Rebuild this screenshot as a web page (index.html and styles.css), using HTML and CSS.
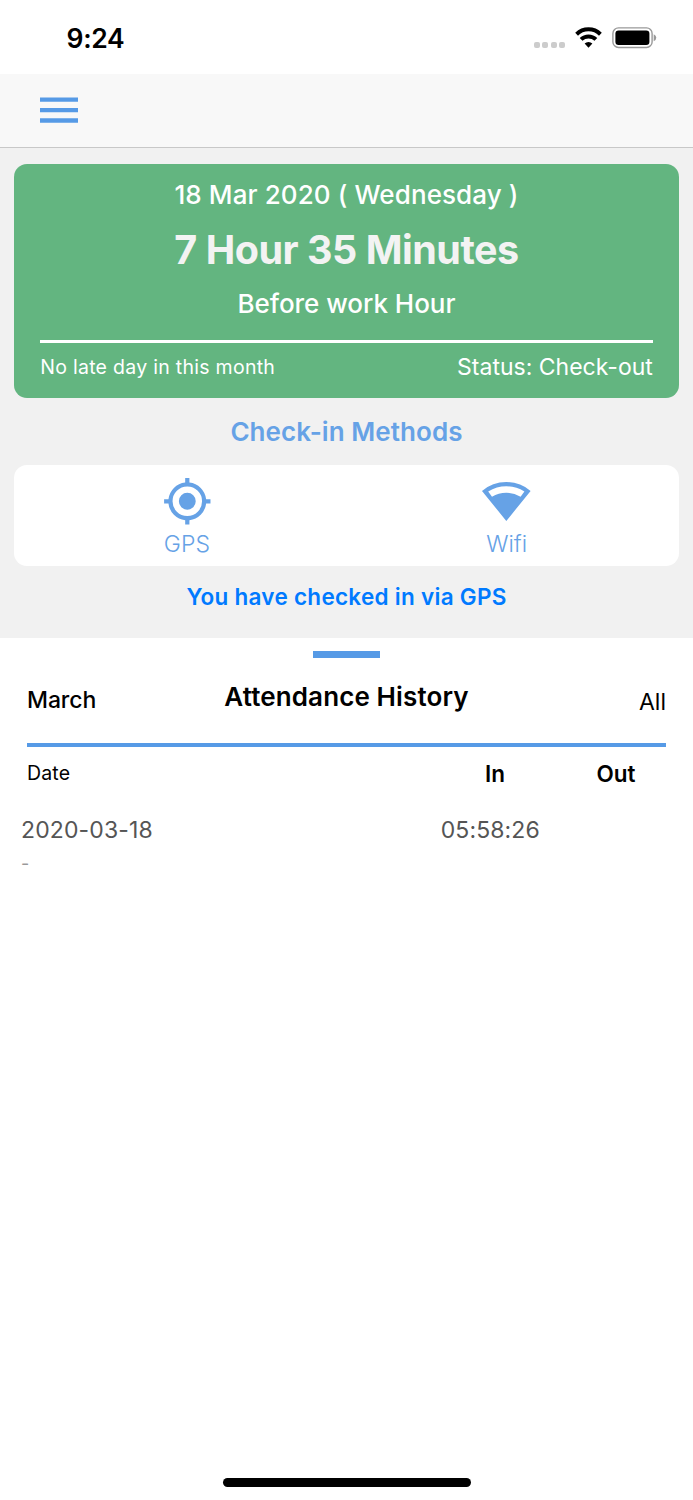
FILE: index.html
```html
<!DOCTYPE html>
<html lang="en">
<head>
<meta charset="utf-8">
<title>Attendance</title>
<link rel="stylesheet" href="styles.css">
</head>
<body>
<header class="status-bar">
  <span class="time">9:24</span>
  <div class="indicators">
    <div class="signal"><i></i><i></i><i></i><i></i></div>
    <svg class="wifi-status" width="27" height="21" viewBox="0 0 27 21">
      <g fill="none" stroke="#000" stroke-width="4">
        <path d="M1.6 7.2A17 17 0 0 1 25.4 7.2"/>
        <path d="M6.100 12.400A10.600 10.600 0 0 1 20.900 12.400"/>
      </g>
      <path d="M13.500 20.800L9.600 16.600A5.700 5.700 0 0 1 17.400 16.600Z"/>
    </svg>
    <svg class="battery" width="45" height="22" viewBox="0 0 45 22">
      <rect x="0.9" y="0.9" width="39.2" height="19.6" rx="5.6" fill="#fff" stroke="#999" stroke-width="1.4"/>
      <rect x="3.400" y="3.400" width="34" height="14.600" rx="3.200"/>
      <path d="M41.700 7.200Q44.300 8.400 44.300 10.700Q44.300 13 41.700 14.200Z" fill="#999"/>
    </svg>
  </div>
</header>
<nav class="nav-bar">
  <svg class="menu" width="38" height="27" viewBox="0 0 38 27"><path fill="#569ae6" d="M0 .4H38V4.800H0ZM0 10.900H38V15.300H0ZM0 21.300H38V25.700H0Z"/></svg>
</nav>
<main class="dashboard">
  <section class="summary">
    <p class="date">18 Mar 2020 ( Wednesday )</p>
    <h1 class="remaining">7 Hour 35 Minutes</h1>
    <p class="before">Before work Hour</p>
    <hr class="summary-rule">
    <div class="summary-foot">
      <span class="late">No late day in this month</span>
      <span class="status">Status: Check-out</span>
    </div>
  </section>
  <h2 class="methods-title">Check-in Methods</h2>
  <section class="methods">
    <div class="method">
      <svg width="50.6" height="50.6" viewBox="0 0 24 24"><path fill="#66a2e6" d="M12 8a4 4 0 1 0 0 8a4 4 0 0 0 0-8zM20.94 11A8.99 8.99 0 0 0 13 3.06V1h-2v2.06A8.99 8.99 0 0 0 3.06 11H1v2h2.06A8.99 8.99 0 0 0 11 20.94V23h2v-2.06A8.99 8.99 0 0 0 20.94 13H23v-2zM12 19a7 7 0 1 1 0-14a7 7 0 0 1 0 14z"/></svg>
      <span class="method-name">GPS</span>
    </div>
    <div class="method">
      <svg width="50.6" height="50.6" viewBox="0 0 50.6 50.6"><path fill="#66a2e6" fill-rule="evenodd" d="M1 14.900Q11.500 6 25.300 6Q39.100 6 49.600 14.900L25.300 45ZM7.200 15.500L11 20.700Q17.500 16.700 25.300 16.700Q33.100 16.700 39.600 20.700L43.400 15.500Q35 10.300 25.300 10.300Q15.600 10.300 7.200 15.500Z"/></svg>
      <span class="method-name">Wifi</span>
    </div>
  </section>
  <p class="notice">You have checked in via GPS</p>
</main>
<section class="history">
  <div class="handle"></div>
  <div class="history-head">
    <span class="month">March</span>
    <h2 class="history-title">Attendance History</h2>
    <span class="all">All</span>
  </div>
  <div class="columns">
    <span class="col-date">Date</span>
    <b class="col-in">In</b>
    <b class="col-out">Out</b>
  </div>
  <div class="entry">
    <span class="entry-date">2020-03-18</span>
    <span class="entry-in">05:58:26</span>
  </div>
  <div class="entry-note">-</div>
</section>
<div class="home-indicator"></div>
</body>
</html>
```
FILE: styles.css
```css
* { box-sizing: border-box; }
body, h1, h2, p, hr { margin: 0; }
body {
  width: 693px;
  height: 1500px;
  display: flex;
  flex-direction: column;
  background: #fff;
  color: #000;
  font-family: Inter, "Liberation Sans", sans-serif;
  font-size: 23px;
  overflow: hidden;
}
i { display: block; }
.status-bar {
  height: 74px;
  display: flex;
  justify-content: space-between;
  padding: 0 36px 0 66.500px;
}
.time { font-size: 26.500px; font-weight: 600; line-height: 77px; letter-spacing: -0.3px; }
.indicators { display: flex; align-items: flex-start; padding-top: 27px; }
.signal { display: flex; gap: 2.400px; padding-top: 15px; }
.signal i { width: 6px; height: 6px; border-radius: 2px; background: #ccc; }
.wifi-status { margin-left: 10px; }
.battery { margin-left: 10px; }
.nav-bar {
  height: 74px;
  padding: 23px 40px;
  background: #f8f8f8;
  border-bottom: 1px solid #c8c8c8;
}
.menu { display: block; }
.dashboard {
  height: 489.700px;
  padding: 16.300px 13.700px 0;
  background: #f1f1f1;
}
.summary {
  height: 234px;
  padding: 11px 26.500px 0;
  border-radius: 13px;
  background: #63b580;
  color: #fff;
  text-align: center;
}
.date { font-size: 26px; font-weight: 450; line-height: 40px; letter-spacing: 0.100px; }
.remaining { font-size: 39.500px; font-weight: 700; line-height: 70px; letter-spacing: -0.480px; color: #f3f3f3; }
.before { font-size: 26px; font-weight: 450; line-height: 38px; letter-spacing: -0.030px; }
.summary-rule { height: 3.400px; margin-top: 16.600px; border: 0; background: #fff; }
.summary-foot { display: flex; justify-content: space-between; line-height: 48px; }
.late { font-size: 19.500px; letter-spacing: 0.280px; }
.status { font-size: 23px; }
.methods-title { font-size: 26px; font-weight: 600; line-height: 67px; letter-spacing: 0.060px; text-align: center; color: #66a2e6; }
.methods {
  height: 100.400px;
  display: flex;
  padding: 10.400px 12.700px 0 13.300px;
  border-radius: 13px;
  background: #fff;
  color: #66a2e6;
}
.method { flex: 1; display: flex; flex-direction: column; align-items: center; }
.method-name { line-height: 37px; font-weight: 350; }
.notice { font-size: 22.500px; font-weight: 600; line-height: 62px; letter-spacing: 0.280px; text-align: center; color: #007aff; }
.history { flex: 1; padding: 13.500px 27px 0; }
.handle { width: 67px; height: 6.500px; margin: 0 auto; background: #569ae6; }
.history-head {
  height: 89.300px;
  display: grid;
  grid-template-columns: 1fr auto 1fr;
  align-items: start;
  border-bottom: 4px solid #569ae6;
}
.month { font-weight: 500; line-height: 84px; letter-spacing: -0.100px; }
.history-title { font-size: 26px; font-weight: 600; line-height: 78px; letter-spacing: 0.120px; }
.all { line-height: 89px; justify-self: end; }
.columns { display: grid; grid-template-columns: 408px 120px 122px; height: 56px; }
.col-date { font-size: 19.500px; line-height: 52px; letter-spacing: 0.150px; }
.col-in, .col-out { font-size: 22.500px; font-weight: 600; line-height: 54px; text-align: center; }
.entry { display: flex; margin-left: -6px; line-height: 54px; color: #555; }
.entry-date { letter-spacing: 0.120px; }
.entry-in { margin-left: 288px; letter-spacing: 0.100px; }
.entry-note { margin-left: -6px; font-size: 18px; line-height: 13px; color: #999; }
.home-indicator {
  width: 248px;
  height: 8.500px;
  margin: 0 auto 13.500px;
  border-radius: 5px;
  background: #000;
}
```
